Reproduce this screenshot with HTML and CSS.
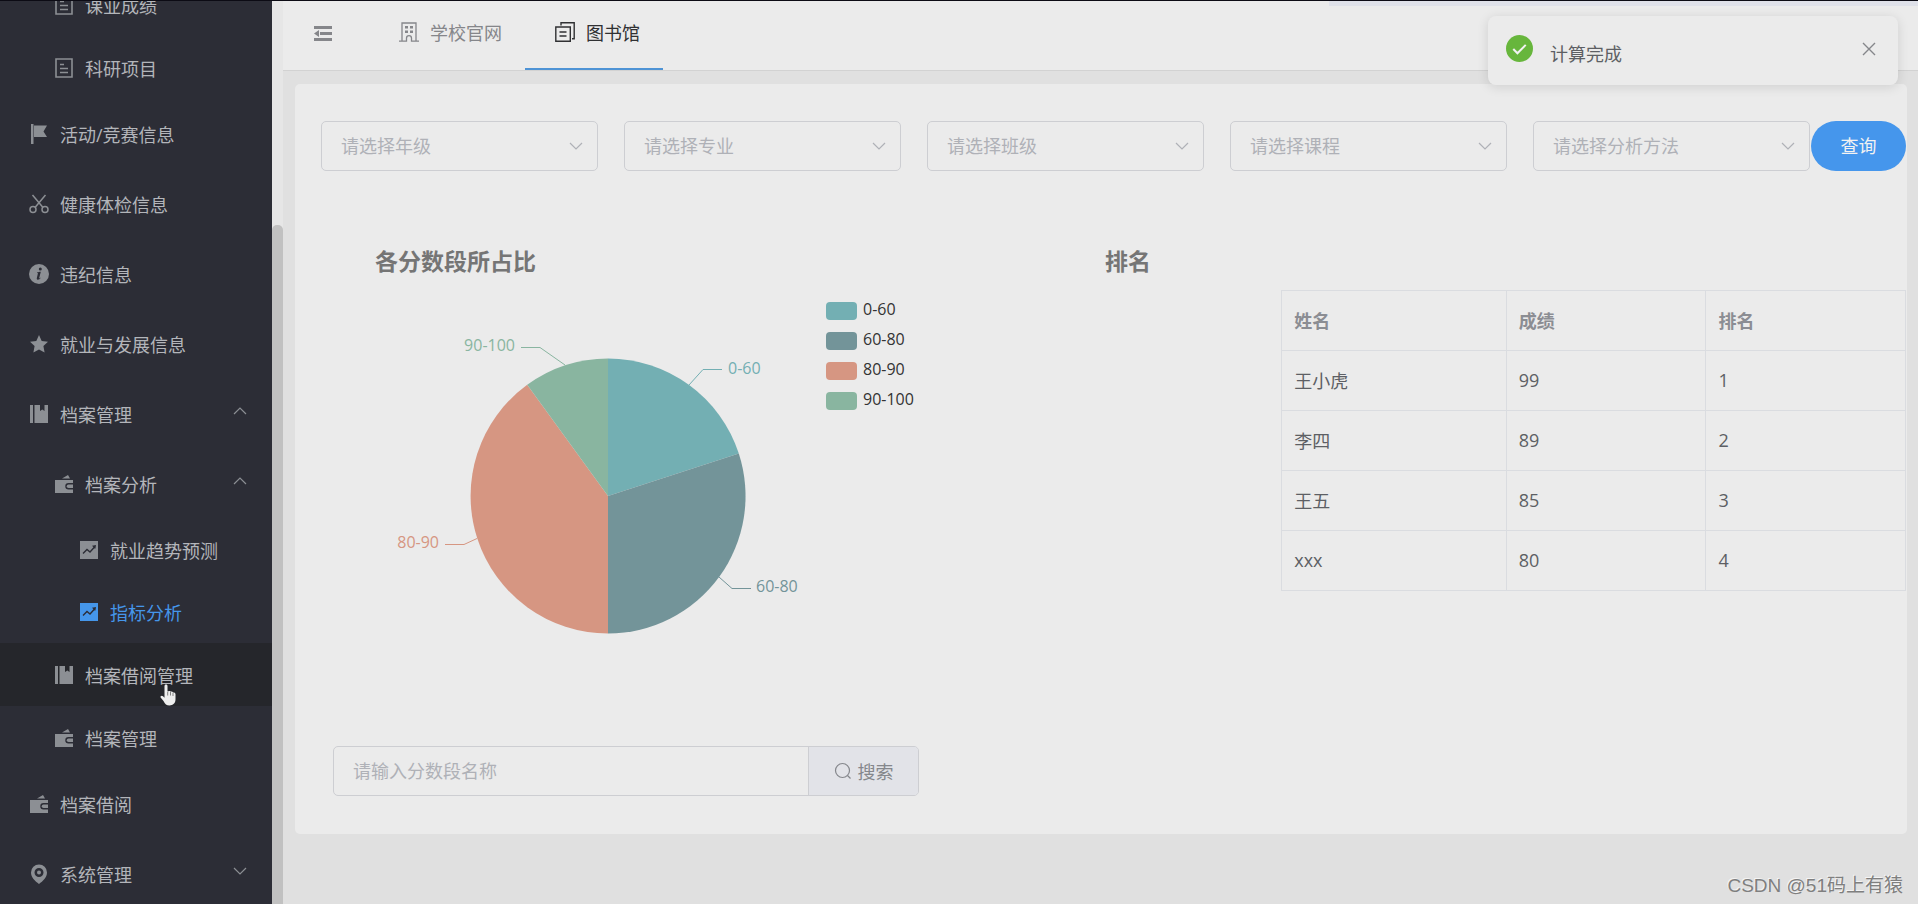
FILE: index.html
```html
<!DOCTYPE html>
<html lang="zh-CN">
<head>
  <meta charset="UTF-8" />
  <meta name="viewport" content="width=device-width, initial-scale=1" />
  <title>指标分析</title>
  <link rel="stylesheet" href="styles.css">
</head>
<body>

<!-- shared icons -->
<svg class="sprite" aria-hidden="true">
  <symbol id="i-doc" viewBox="0 0 20 20"><path d="M2 1h16v18H2z M6 6.5h4 M6 10.5h8 M6 14.5h8" fill="none" stroke="currentColor" stroke-width="1.6"/></symbol>
  <symbol id="i-flag" viewBox="0 0 20 20"><path d="M2 0h2.5v20H2z M5 1.5h13L14.5 7.5 18 13H5z" fill="currentColor"/></symbol>
  <symbol id="i-cut" viewBox="0 0 20 20"><g fill="none" stroke="currentColor" stroke-width="1.5"><circle cx="4" cy="15.5" r="3"/><circle cx="16" cy="15.5" r="3"/><path d="M3.5 1l10.5 12.5M16.5 1L6 13.5"/></g></symbol>
  <symbol id="i-info" viewBox="0 0 20 20"><circle cx="10" cy="10" r="10" fill="currentColor"/><circle cx="11.3" cy="5" r="1.5" fill="#2c2d36"/><path d="M8 8.5c1.5-.2 2.5-.8 3.8-.8L10.2 14c-.1.6.5.5 1.6-.4-.8 1.5-2 2.3-3 2.2-1.2-.1-1.1-1.2-.9-2l1-4.2c.1-.6-.2-.7-.9-.7z" fill="#2c2d36"/></symbol>
  <symbol id="i-star" viewBox="0 0 20 20"><path d="M10 1l2.7 5.9 6.3.8-4.6 4.4 1.2 6.4L10 15.4l-5.6 3.1 1.2-6.4L1 7.7l6.300-.8z" fill="currentColor"/></symbol>
  <symbol id="i-book" viewBox="0 0 20 20"><path d="M1 1h3v18H1z M5.5 1H11v6l2.3-1.6L15.5 7V1H19v18H5.5z" fill="currentColor"/></symbol>
  <symbol id="i-wallet" viewBox="0 0 20 20"><path d="M1 6h18v3h-4.5a3 3 0 0 0 0 6.5H19V19H1z M8 4.5L14 1l2 3.5z" fill="currentColor"/><path d="M14.5 10.5H19V14h-4.5a1.7 1.7 0 0 1 0-3.5z" fill="currentColor"/></symbol>
  <symbol id="i-data" viewBox="0 0 20 20"><path d="M1 1h18v18H1z" fill="currentColor"/><path d="M4 13.5l4-4 3 2.5 5-5.5" fill="none" stroke="#2c2d36" stroke-width="1.4"/><path d="M13 5.8l4-.8-.8 4z" fill="#2c2d36"/></symbol>
  <symbol id="i-pin" viewBox="0 0 20 20"><path fill-rule="evenodd" d="M10 .5a8 8 0 0 1 8 8c0 5-4 8.5-8 11.5-4-3-8-6.5-8-11.5a8 8 0 0 1 8-8zM10 4a4.5 4.5 0 1 0 0 9 4.5 4.5 0 0 0 0-9z" fill="currentColor"/><circle cx="10" cy="8.5" r="2" fill="currentColor"/></symbol>
  <symbol id="i-down" viewBox="0 0 14 14"><path d="M1 4l6 6 6-6" fill="none" stroke="currentColor" stroke-width="1.2"/></symbol>
  <symbol id="i-up" viewBox="0 0 14 14"><path d="M1 10l6-6 6 6" fill="none" stroke="currentColor" stroke-width="1.2"/></symbol>
</svg>

<aside class="sidebar">
  <ul class="menu">
    <li><a class="item level2" href="#"><svg class="icon"><use href="#i-doc"/></svg>课业成绩</a></li>
    <li><a class="item level2" href="#"><svg class="icon"><use href="#i-doc"/></svg>科研项目</a></li>
    <li><a class="item" href="#"><svg class="icon"><use href="#i-flag"/></svg>活动/竞赛信息</a></li>
    <li><a class="item" href="#"><svg class="icon"><use href="#i-cut"/></svg>健康体检信息</a></li>
    <li><a class="item" href="#"><svg class="icon"><use href="#i-info"/></svg>违纪信息</a></li>
    <li><a class="item" href="#"><svg class="icon"><use href="#i-star"/></svg>就业与发展信息</a></li>
    <li>
      <a class="item" href="#"><svg class="icon"><use href="#i-book"/></svg>档案管理<svg class="arrow"><use href="#i-up"/></svg></a>
      <ul>
        <li>
          <a class="item sub-title" href="#"><svg class="icon"><use href="#i-wallet"/></svg>档案分析<svg class="arrow"><use href="#i-up"/></svg></a>
          <ul>
            <li><a class="item level3" href="#"><svg class="icon"><use href="#i-data"/></svg>就业趋势预测</a></li>
            <li><a class="item level3 active" href="#"><svg class="icon"><use href="#i-data"/></svg>指标分析</a></li>
          </ul>
        </li>
        <li>
          <a class="item level2 hover" href="#"><svg class="icon"><use href="#i-book"/></svg>档案借阅管理</a>
          <svg class="cursor" viewBox="0 0 16 22"><path d="M6 .5c1 0 1.5.6 1.5 1.5v5l1.2.2c.8-.5 1.8-.2 2.2.5.8-.3 1.8 0 2.1.8 1.3-.2 2.5.4 2.5 1.8v5c0 4-2.5 6.2-6 6.2-3 0-4.5-1.5-6-4.5L.6 13.5c-.6-1.5 1.2-2.5 2.4-1.3l1.5 1.6V2c0-.9.5-1.5 1.5-1.5z" fill="#eee"/><path d="M7.7 7.5v4M10.5 8v3.5M13 9v3" stroke="#555" stroke-width=".7"/></svg>
        </li>
        <li><a class="item level2" href="#"><svg class="icon"><use href="#i-wallet"/></svg>档案管理</a></li>
      </ul>
    </li>
    <li><a class="item" href="#"><svg class="icon"><use href="#i-wallet"/></svg>档案借阅</a></li>
    <li><a class="item" href="#"><svg class="icon"><use href="#i-pin"/></svg>系统管理<svg class="arrow"><use href="#i-down"/></svg></a></li>
  </ul>
</aside>
<div class="scrollbar"><div class="thumb"></div></div>

<div class="page">
  <header class="header">
    <button class="fold" aria-label="收起菜单">
      <svg viewBox="0 0 18 15"><path d="M0 0h18v3H0z M6 6h12v3H6z M0 12h18v3H0z M0 7.5l5-3.5v7z" fill="currentColor"/></svg>
    </button>
    <nav class="tabs">
      <a class="tab" href="#">
        <svg viewBox="0 0 20 20"><path d="M3 19V1h14v18 M0 19.2h7.5v-3a2.5 2.5 0 0 1 5 0v3H20" fill="none" stroke="currentColor" stroke-width="1.3"/><path d="M6 4h3v2.5H6z M11 4h3v2.5h-3z M6 8.5h3V11H6z M11 8.5h3V11h-3z" fill="currentColor"/></svg>
        学校官网
      </a>
      <a class="tab current" href="#">
        <svg viewBox="0 0 20 20"><path d="M.8 5h14.500v14.200H.8z M6 3.5V.8h13.200v16H17 M4.5 10h7 M4.5 14h7" fill="none" stroke="currentColor" stroke-width="1.4"/></svg>
        图书馆
      </a>
    </nav>
  </header>

  <main class="card">
    <form class="filters">
      <div class="select">
        <select aria-label="年级"><option>请选择年级</option></select>
        <svg><use href="#i-down"/></svg>
      </div>
      <div class="select">
        <select aria-label="专业"><option>请选择专业</option></select>
        <svg><use href="#i-down"/></svg>
      </div>
      <div class="select">
        <select aria-label="班级"><option>请选择班级</option></select>
        <svg><use href="#i-down"/></svg>
      </div>
      <div class="select">
        <select aria-label="课程"><option>请选择课程</option></select>
        <svg><use href="#i-down"/></svg>
      </div>
      <div class="select">
        <select aria-label="分析方法"><option>请选择分析方法</option></select>
        <svg><use href="#i-down"/></svg>
      </div>
      <button class="query-btn" type="button">查询</button>
    </form>

    <div class="content">
      <section class="chart-box">
        <h2>各分数段所占比</h2>
        <svg class="chart" width="620" height="400" viewBox="0 0 620 400">
          <!-- slices -->
          <path class="c1" d="M287 220V82.5A137.5 137.5 0 0 1 417.8 177.5z"/>
          <path class="c2" d="M287 220L417.8 177.5A137.5 137.5 0 0 1 287 357.5z"/>
          <path class="c3" d="M287 220V357.5A137.5 137.5 0 0 1 206.2 108.8z"/>
          <path class="c4" d="M287 220L206.2 108.8A137.5 137.5 0 0 1 287 82.5z"/>
          <!-- label lines -->
          <polyline class="l1" points="368,109 382,93.5 401,93.5"/>
          <polyline class="l2" points="398,301 411,312.5 430,312.5"/>
          <polyline class="l3" points="156,262.5 143,268.5 124,268.5"/>
          <polyline class="l4" points="244,89 219,71.5 200,71.5"/>
          <text class="c1" x="407" y="98">0-60</text>
          <text class="c2" x="435" y="316">60-80</text>
          <text class="c3" x="118" y="272" text-anchor="end">80-90</text>
          <text class="c4" x="194" y="75" text-anchor="end">90-100</text>
          <!-- legend -->
          <rect class="c1" x="505" y="26" width="31" height="18" rx="4"/>
          <rect class="c2" x="505" y="56" width="31" height="18" rx="4"/>
          <rect class="c3" x="505" y="86" width="31" height="18" rx="4"/>
          <rect class="c4" x="505" y="116" width="31" height="18" rx="4"/>
          <text x="542" y="39">0-60</text>
          <text x="542" y="69">60-80</text>
          <text x="542" y="99">80-90</text>
          <text x="542" y="129">90-100</text>
        </svg>
      </section>

      <section class="rank-box">
        <h2>排名</h2>
        <table>
          <thead>
            <tr><th>姓名</th><th>成绩</th><th>排名</th></tr>
          </thead>
          <tbody>
            <tr><td>王小虎</td><td>99</td><td>1</td></tr>
            <tr><td>李四</td><td>89</td><td>2</td></tr>
            <tr><td>王五</td><td>85</td><td>3</td></tr>
            <tr><td>xxx</td><td>80</td><td>4</td></tr>
          </tbody>
        </table>
      </section>
    </div>

    <form class="search">
      <input type="text" placeholder="请输入分数段名称" aria-label="分数段名称">
      <button type="button">
        <svg viewBox="0 0 18 18"><circle cx="8.5" cy="8.5" r="7" fill="none" stroke="currentColor" stroke-width="1.2"/><path d="M13.5 13.5l3 3" stroke="currentColor" stroke-width="1.2"/></svg>
        搜索
      </button>
    </form>
  </main>
</div>

<div class="progress"></div>

<div class="toast" role="alert">
  <svg class="ok" viewBox="0 0 26 26"><circle cx="13" cy="13" r="13" fill="#67b63c"/><path d="M7 13.5l4 4 8-8" fill="none" stroke="#f2f2f2" stroke-width="2"/></svg>
  <p>计算完成</p>
  <button aria-label="关闭"><svg viewBox="0 0 14 14"><path d="M1 1l12 12M13 1L1 13" stroke="currentColor" stroke-width="1.4"/></svg></button>
</div>

<div class="watermark">CSDN @51码上有猿</div>

</body>
</html>
```
FILE: styles.css
```css
* {
  box-sizing: border-box;
}
body {
  display: flex;
  min-height: 100vh;
  margin: 0;
  border-top: 1px solid #0c0b14;
  background: #e0e0e0;
  color: #5d5f64;
  font-family: "Open Sans", "Noto Sans CJK SC", sans-serif;
  font-size: 18px;
}
ul {
  margin: 0;
  padding: 0;
  list-style: none;
}
a {
  text-decoration: none;
}
button, input, select {
  font: inherit;
}
button {
  border: none;
  background: none;
  cursor: pointer;
}
.sprite {
  position: absolute;
  width: 0;
  height: 0;
}

/* sidebar */
.sidebar {
  flex: none;
  width: 272px;
  height: calc(100vh - 1px);
  overflow: hidden;
  background: #2c2d36;
}
/* menu is scrolled down inside the sidebar */
.menu {
  margin-top: -28px;
}
.menu li {
  position: relative;
}
.item {
  display: flex;
  align-items: center;
  height: 70px;
  padding: 0 25px;
  color: #b3b5ba;
}
.item.sub-title {
  padding-left: 50px;
}
.item.level2 {
  height: 63px;
  padding-left: 50px;
}
.item.level3 {
  height: 62px;
  padding-left: 75px;
}
.item.hover {
  background: #25262b;
}
.icon {
  width: 20px;
  height: 20px;
  margin: 0 11px 0 4px;
  color: #8c8f94;
}
.item.active, .item.active .icon {
  color: #4596ea;
}
.arrow {
  width: 14px;
  height: 14px;
  margin: 0 0 6px auto;
  color: #8c8f94;
}
.cursor {
  position: absolute;
  left: 160px;
  top: 41px;
  width: 16px;
  height: 22px;
}
.scrollbar {
  flex: none;
  width: 11px;
  padding-top: 224px;
  background: #e6e6e6;
}
.thumb {
  height: 100%;
  border-radius: 5px 5px 0 0;
  background: #c1c1c1;
}

/* header */
.page {
  flex: 1;
  min-width: 0;
}
.header {
  display: flex;
  height: 70px;
  padding-left: 31px;
  border-bottom: 1px solid #d2d2d2;
  background: #ebebeb;
}
.fold {
  width: 18px;
  height: 64px;
  margin-right: 37px;
  padding: 0;
  color: #85868a;
}
.fold svg {
  display: block;
  width: 18px;
  height: 15px;
}
.tabs {
  display: flex;
}
.tab {
  display: flex;
  align-items: center;
  padding: 0 23px 6px 30px;
  border-bottom: 2px solid transparent;
  color: #85868a;
}
.tab svg {
  width: 20px;
  height: 20px;
  margin-right: 11px;
}
.tab.current {
  color: #303133;
  border-bottom-color: #4e93d5;
}

/* card */
.card {
  margin: 13px 11px 0 12px;
  padding: 37px 1px 38px 26px;
  border-radius: 5px;
  background: #ebebeb;
}
.filters {
  display: flex;
  gap: 26px;
}
.select {
  position: relative;
  flex: 1;
}
.select select {
  display: block;
  width: 100%;
  height: 50px;
  padding: 0 40px 1px 19px;
  border: 1px solid #cdced2;
  border-radius: 5px;
  background: transparent;
  color: #afb1b7;
  appearance: none;
}
.select svg {
  position: absolute;
  right: 15px;
  top: 18px;
  width: 14px;
  height: 14px;
  color: #afb1b7;
  pointer-events: none;
}
.query-btn {
  width: 95px;
  height: 50px;
  margin-left: -25px;
  padding: 0 0 2px;
  border-radius: 25px;
  background: #4596ec;
  color: #f2f2f2;
}

.content {
  display: grid;
  grid-template-columns: 784fr 801fr;
  margin-top: 75px;
}
h2 {
  margin: 0;
  color: #757575;
  font-size: 23px;
  line-height: 30px;
}
.chart-box h2 {
  padding-left: 54px;
}
.chart {
  display: block;
  font-size: 16px;
  fill: #333;
}
.c1 { fill: #73afb3; }
.c2 { fill: #739499; }
.c3 { fill: #d69682; }
.c4 { fill: #89b5a0; }
polyline {
  fill: none;
}
.l1 { stroke: #73afb3; }
.l2 { stroke: #739499; }
.l3 { stroke: #d69682; }
.l4 { stroke: #89b5a0; }

.rank-box table {
  width: 78%;
  margin: 14px 0 0 auto;
  border-collapse: collapse;
  table-layout: fixed;
}
th, td {
  height: 60px;
  padding: 0 12px 2px;
  border: 1px solid #dadce0;
  text-align: left;
}
th {
  color: #8b8d93;
}
th:first-child {
  width: 36%;
}

.search {
  display: flex;
  width: 37%;
  height: 50px;
  margin: 70px 0 0 12px;
  border: 1px solid #cdced2;
  border-radius: 5px;
}
.search input {
  flex: 1;
  min-width: 0;
  padding: 0 19px;
  border: none;
  background: transparent;
}
.search input::placeholder {
  color: #afb1b7;
}
.search button {
  display: flex;
  align-items: center;
  gap: 5px;
  padding: 0 25px;
  border-left: 1px solid #cdced2;
  border-radius: 0 4px 4px 0;
  background: #e2e3e8;
  color: #85878c;
}
.search button svg {
  width: 18px;
  height: 18px;
}

/* overlays */
.progress {
  position: absolute;
  top: 1px;
  right: 0;
  width: 589px;
  height: 5px;
  background: #dfe1e9;
}
.toast {
  position: absolute;
  top: 16px;
  right: 20px;
  display: flex;
  align-items: flex-start;
  width: 410px;
  padding: 19px 22px 18px 18px;
  border-radius: 8px;
  background: #ebebeb;
  box-shadow: 0 2px 12px rgba(0, 0, 0, 0.12);
}
.toast .ok {
  width: 27px;
  height: 27px;
}
.toast p {
  flex: 1;
  margin: 6px 0 0 17px;
  line-height: 26px;
}
.toast button {
  height: 27px;
  padding: 0;
  color: #85868a;
}
.toast button svg {
  display: block;
  width: 14px;
  height: 14px;
}
.watermark {
  position: absolute;
  right: 15px;
  bottom: 7px;
  color: #7f7f7f;
  font-family: "Liberation Sans", "Noto Sans CJK SC", sans-serif;
  font-size: 19px;
  text-shadow: -1px -1px 0 #f4f4f4;
}
```
